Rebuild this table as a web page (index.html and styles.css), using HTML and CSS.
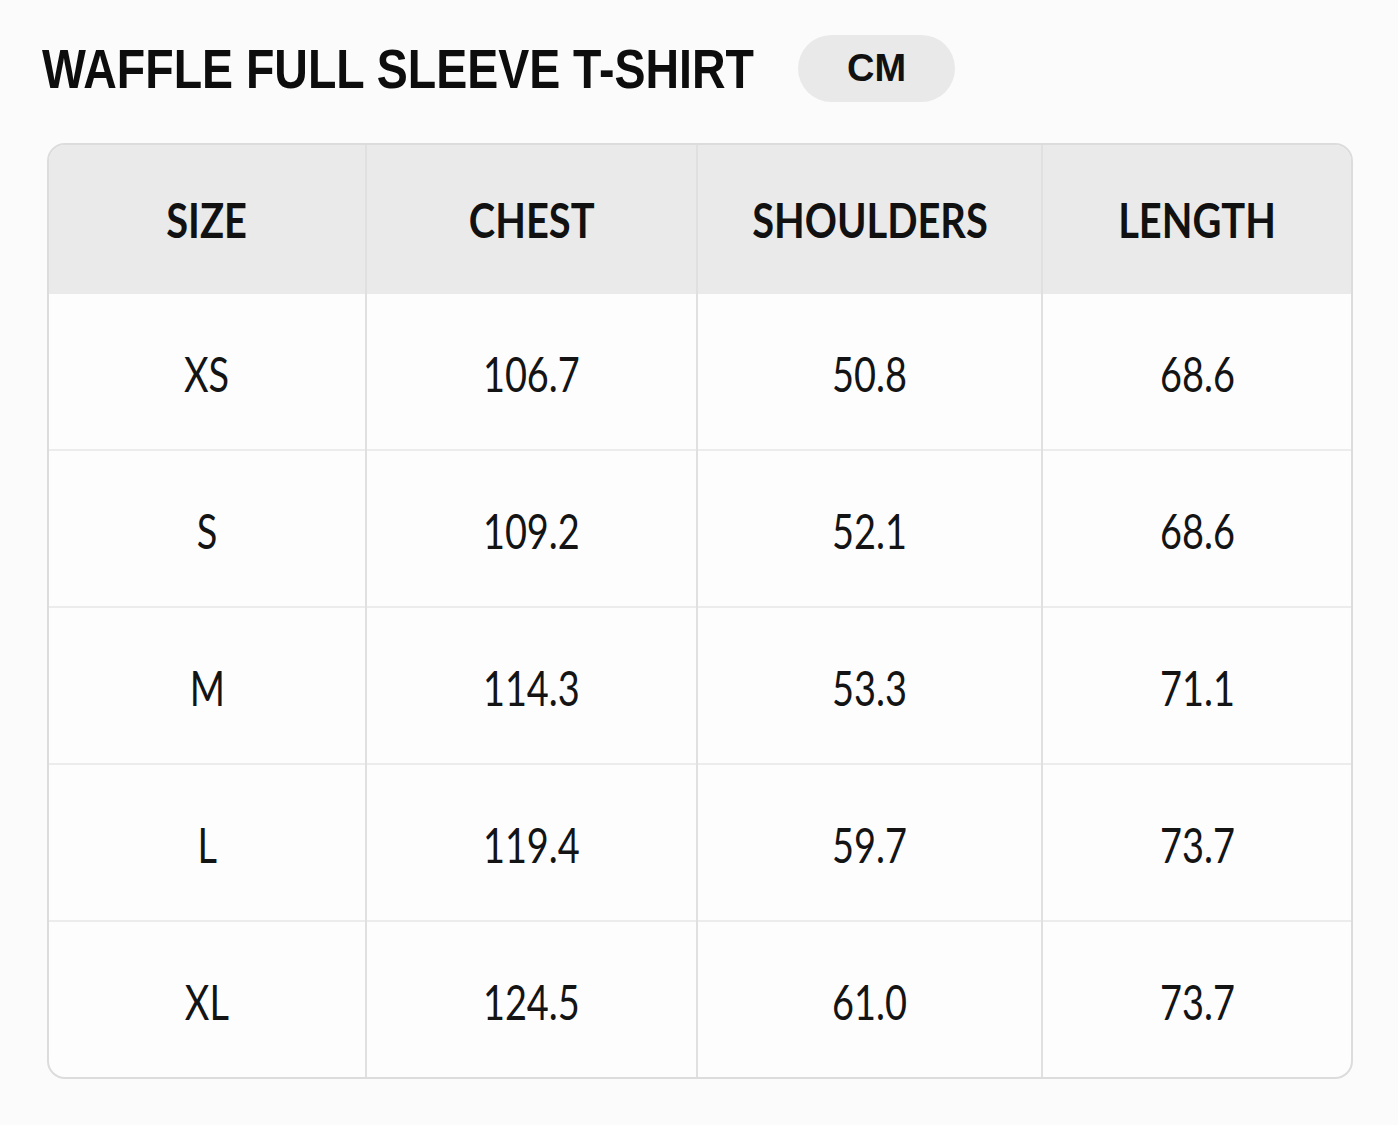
FILE: index.html
```html
<!DOCTYPE html>
<html>
<head>
<meta charset="utf-8">
<link rel="stylesheet" href="styles.css">
</head>
<body>
<div class="page">
  <div class="head">
    <h1 class="title"><span>WAFFLE FULL SLEEVE T-SHIRT</span></h1>
    <div class="unit">CM</div>
  </div>
  <div class="card">
    <table class="chart">
      <thead>
        <tr><th><span>SIZE</span></th><th><span>CHEST</span></th><th><span>SHOULDERS</span></th><th><span>LENGTH</span></th></tr>
      </thead>
      <tbody>
        <tr><td><span>XS</span></td><td><span>106.7</span></td><td><span>50.8</span></td><td><span>68.6</span></td></tr>
        <tr><td><span>S</span></td><td><span>109.2</span></td><td><span>52.1</span></td><td><span>68.6</span></td></tr>
        <tr><td><span>M</span></td><td><span>114.3</span></td><td><span>53.3</span></td><td><span>71.1</span></td></tr>
        <tr><td><span>L</span></td><td><span>119.4</span></td><td><span>59.7</span></td><td><span>73.7</span></td></tr>
        <tr><td><span>XL</span></td><td><span>124.5</span></td><td><span>61.0</span></td><td><span>73.7</span></td></tr>
      </tbody>
    </table>
  </div>
</div>
</body>
</html>
```
FILE: styles.css
```css
html, body {
  margin: 0;
  padding: 0;
  background: #fbfbfb;
}
.page {
  width: 1398px;
  height: 1125px;
  padding: 35px 0 0 0;
  box-sizing: border-box;
}
.head {
  display: flex;
  align-items: center;
  padding-left: 42px;
  height: 67px;
}
.title {
  margin: 0;
  width: 756px;
  white-space: nowrap;
  font-family: "Liberation Sans", Arial, sans-serif;
  font-weight: 700;
  font-size: 56px;
  line-height: 1;
  color: #0d0d0d;
}
.title span {
  display: inline-block;
  transform: scaleX(0.83);
  transform-origin: left center;
  margin-top: -2px;
}
.unit {
  width: 157px;
  height: 67px;
  border-radius: 34px;
  background: #e9e9e9;
  display: flex;
  align-items: center;
  justify-content: center;
  font-family: "Liberation Sans", Arial, sans-serif;
  font-weight: 700;
  font-size: 38px;
  color: #111;
}
.card {
  margin: 41px 0 0 47px;
  width: 1306px;
  border: 2px solid #dcdcdc;
  border-radius: 18px;
  overflow: hidden;
  box-sizing: border-box;
  background: #fdfdfd;
}
.chart {
  width: 100%;
  border-collapse: collapse;
  table-layout: fixed;
}
.chart th, .chart td {
  text-align: center;
  border-left: 2px solid #e0e0e0;
  padding: 0;
  white-space: nowrap;
}
.chart th span, .chart td span {
  display: inline-block;
  transform-origin: center center;
}
.chart th:first-child, .chart td:first-child {
  border-left: none;
}
.chart th:nth-child(1) { width: 316px; }
.chart th:nth-child(2) { width: 329px; }
.chart th:nth-child(3) { width: 343px; }
.chart th {
  height: 149px;
  background: #eaeaea;
  font-family: Lato, "Noto Sans", sans-serif;
  font-weight: 700;
  font-size: 48px;
  color: #111;
}
.chart th span {
  transform: scaleX(0.83);
}
.chart td {
  height: 155px;
  border-top: 2px solid #ececec;
  font-family: Lato, "Noto Sans", sans-serif;
  font-size: 48px;
  color: #141414;
}
.chart td span {
  transform: scaleX(0.79);
  margin-top: 3px;
}
.chart tbody tr:first-child td {
  border-top: none;
}
```
